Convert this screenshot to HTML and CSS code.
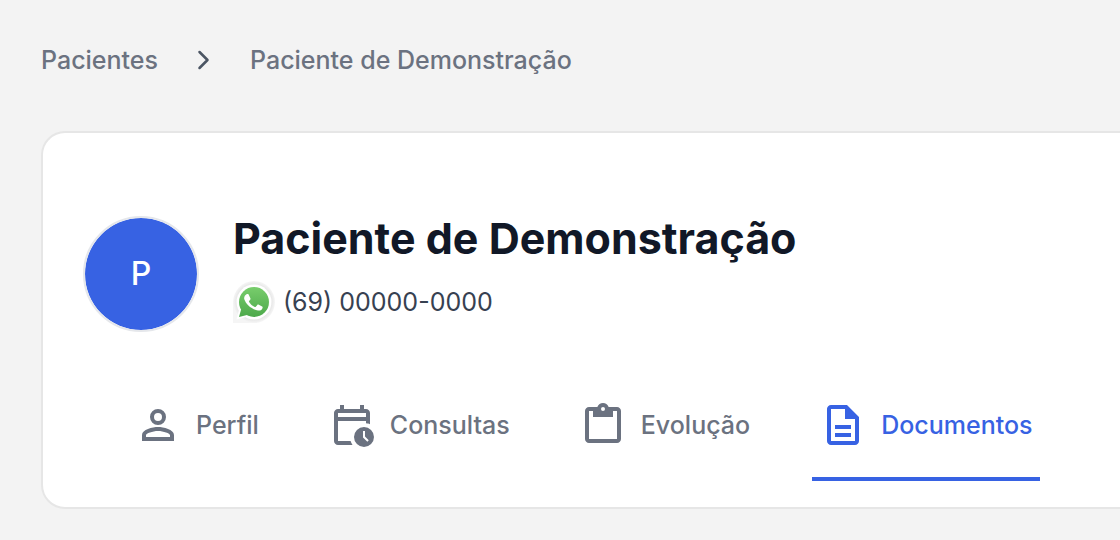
FILE: index.html
```html
<!DOCTYPE html>
<html lang="pt-BR">
<head>
<meta charset="utf-8">
<meta name="viewport" content="width=device-width, initial-scale=1">
<title>Paciente de Demonstração</title>
<link rel="stylesheet" href="styles.css">
</head>
<body>
<nav class="breadcrumb" aria-label="Navegação estrutural">
  <a href="#pacientes">Pacientes</a>
  <svg class="chevron" viewBox="0 0 24 24" aria-hidden="true"><path d="M7.500 4l8 8-8 8"/></svg>
  <a href="#paciente" aria-current="page">Paciente de Demonstração</a>
</nav>
<main class="card">
  <header class="patient">
    <div class="avatar">P</div>
    <div class="details">
      <h1 class="name">Paciente de Demonstração</h1>
      <a class="phone" href="#whatsapp">
        <svg class="whatsapp" viewBox="0 0 42 42" aria-hidden="true">
          <defs>
            <linearGradient id="wa-green" gradientUnits="userSpaceOnUse" x1="0" y1="6" x2="0" y2="36"><stop offset="0" stop-color="#78cd6c"/><stop offset="1" stop-color="#4da94b"/></linearGradient>
            <radialGradient id="wa-shade"><stop offset="0.800" stop-color="#e4e4e4"/><stop offset="1" stop-color="#f6f6f6"/></radialGradient>
          </defs>
          <path fill="#f5f5f5" d="M0 22h24v20H0z"/>
          <circle cx="21" cy="21" r="21" fill="url(#wa-shade)"/>
          <g fill="#fff"><circle cx="21" cy="21" r="17.500"/><path d="M3.500 38.500l3-11.500L15 35.500z"/></g>
          <g fill="url(#wa-green)"><circle cx="21" cy="21" r="15"/><path d="M6 36l2.500-9 6.500 6.700z"/></g>
          <path fill="#fff" d="M13.500 13.300c.6-.4 1.700-.5 2.100.2l1.900 4c.2.600-.2 1.200-1.500 2.700-.2.300-.1.500.1.900 1.400 2.300 3.200 3.900 5.700 4.900.4.200.7.100 1-.2l1.500-1.900c.3-.4.600-.5 1.100-.3l3.700 1.800c.5.300.6.500.5 1.300-.3 2.300-2.800 3.200-4.600 2.800-7-1.300-12.200-6.500-13.700-11.200-.6-2.100.7-4.200 2.200-5z"/>
        </svg>
        <span>(69) 00000-0000</span>
      </a>
    </div>
  </header>
  <nav class="tabs" aria-label="Seções do paciente">
    <a class="tab" href="#perfil">
      <svg class="icon" viewBox="0 0 24 24" aria-hidden="true"><path fill-rule="evenodd" d="M12 12a4 4 0 1 1 0-8 4 4 0 0 1 0 8zm0-2a2 2 0 1 0 0-4 2 2 0 0 0 0 4zM4 20v-3c0-2.700 5.300-4 8-4s8 1.300 8 4v3zm2-2h12v-1c0-.700-3.300-2-6-2s-6 1.300-6 2z"/></svg>
      Perfil
    </a>
    <a class="tab" href="#consultas">
      <svg class="icon" viewBox="0 0 24 24" aria-hidden="true"><path d="M5 22q-.825 0-1.412-.587T3 20V6q0-.825.588-1.412T5 4h1V2h2v2h8V2h2v2h1q.825 0 1.413.588T21 6v5.675q-.475-.225-.975-.375T19 11.075V10H5v10h6.300q.175.550.413 1.050t.562.950zM5 8h14V6H5z"/><path fill-rule="evenodd" d="M18 23a5 5 0 1 1 0-10 5 5 0 0 1 0 10zm1.675-2.625.7-.7L18.500 17.800V15h-1v3.200z"/></svg>
      Consultas
    </a>
    <a class="tab" href="#evolucao">
      <svg class="icon" viewBox="0 0 24 24" aria-hidden="true"><path fill-rule="evenodd" d="M5 21q-.825 0-1.412-.587T3 19V5q0-.825.588-1.412T5 3h4.175Q10 1 12 1t2.825 2H19q.825 0 1.413.588T21 5v14q0 .825-.587 1.413T19 21zm0-2h14V5h-2v3H7V5H5zm7-14a1 1 0 1 0 0-2 1 1 0 0 0 0 2z"/></svg>
      Evolução
    </a>
    <a class="tab tab-active" href="#documentos" aria-current="page">
      <svg class="icon" viewBox="0 0 24 24" aria-hidden="true"><path fill-rule="evenodd" d="M8 18h8v-2H8zm0-4h8v-2H8zm-2 8q-.825 0-1.412-.587T4 20V4q0-.825.588-1.412T6 2h8l6 6v12q0 .825-.587 1.413T18 22zm7-13V4H6v16h12V9z"/></svg>
      Documentos
    </a>
  </nav>
</main>
</body>
</html>
```
FILE: styles.css
```css
* { box-sizing: border-box; }

body {
  margin: 0;
  padding: 40px 0 32px 41px;
  background: #f3f3f3;
  color: #6b7280;
  font: 500 25px/40px Inter, sans-serif;
}

a { color: inherit; text-decoration: none; }

.breadcrumb { display: flex; align-items: center; gap: 32px; }

.chevron {
  width: 28px;
  height: 24px;
  fill: none;
  stroke: #4b5563;
  stroke-width: 2.5;
  stroke-linecap: round;
  stroke-linejoin: round;
}

.card {
  margin-top: 51px;
  padding: 83px 0 26px 40px;
  background: #fff;
  border: 2px solid #e6e6e6;
  border-right: 0;
  border-radius: 24px 0 0 24px;
}

.patient { display: flex; align-items: flex-start; gap: 34px; }

.avatar {
  display: grid;
  place-items: center;
  flex: none;
  width: 116px;
  height: 116px;
  border: 2px solid #e5e7eb;
  border-radius: 50%;
  background: #3762e3;
  background-clip: padding-box;
  color: #fff;
  font-size: 32px;
}

.name {
  margin: 0;
  color: #111827;
  font-size: 43px;
  font-weight: 700;
  line-height: 44px;
}

.phone {
  display: flex;
  align-items: center;
  gap: 8px;
  margin-top: 21px;
  color: #374151;
  font-weight: 400;
}

.whatsapp { width: 42px; height: 42px; }

.tabs { display: flex; gap: 55px; margin: 69px 0 0 44px; }

.tab {
  display: flex;
  align-items: center;
  gap: 14px;
  padding: 0 7px 28px;
  border-bottom: 4px solid transparent;
}

.tab-active { border-color: #3762e3; color: #3762e3; }

.icon { width: 48px; height: 48px; fill: currentColor; }
```
